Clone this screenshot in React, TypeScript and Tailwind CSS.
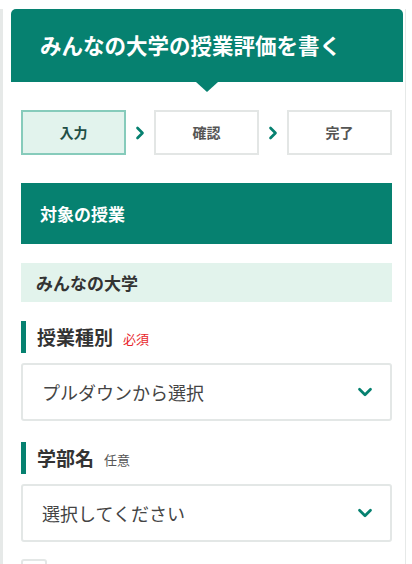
import { ChevronDown, ChevronRight } from "lucide-react"

const steps = [
  { label: "入力", active: true },
  { label: "確認", active: false },
  { label: "完了", active: false },
]

function FieldLabel({ title, tag, required }: { title: string; tag: string; required?: boolean }) {
  return (
    <div className="flex h-[32px] items-stretch">
      <div className="w-[5px] bg-[#068170]" />
      <div className="ml-[11px] flex items-center">
        <span className="text-[19px] font-bold text-[#333]">{title}</span>
        <span
          className={`ml-[10px] mt-[4px] text-[13px] ${required ? "text-[#e8262b]" : "text-[#555]"}`}
        >
          {tag}
        </span>
      </div>
    </div>
  )
}

function SelectBox({ placeholder }: { placeholder: string }) {
  return (
    <div className="mt-[10px] flex h-[58px] items-center justify-between rounded-[3px] border-2 border-[#e3e7e6] bg-white pl-[19px] pr-[14px]">
      <span className="text-[18px] text-[#444]">{placeholder}</span>
      <ChevronDown className="h-[22px] w-[22px] text-[#068170]" strokeWidth={3} />
    </div>
  )
}

export default function App() {
  return (
    <div
      className="h-[564px] w-full overflow-hidden bg-white"
      style={{ fontFamily: '"Noto Sans CJK JP", "Noto Sans", sans-serif' }}
    >
      <div className="min-h-[564px] w-[406px] border-l-[3px] border-r border-[#e6e9e8] pb-[10px]">
        {/* header */}
        <div className="relative ml-[8px] mr-[2px] mt-[9px] flex h-[73px] items-center rounded-t-[5px] bg-[#068170] pl-[29px]">
          <h1 className="text-[21.5px] font-bold text-white">みんなの大学の授業評価を書く</h1>
          <div className="absolute left-1/2 top-full -translate-x-1/2 border-x-[11px] border-t-[10px] border-x-transparent border-t-[#068170]" />
        </div>

        <div className="ml-[18px] mr-[13px]">
          {/* steps */}
          <div className="mt-[28px] flex items-center">
            {steps.map((step, i) => (
              <div key={step.label} className="flex items-center">
                {i > 0 ? (
                  <div className="flex w-[28px] justify-center">
                    <ChevronRight className="h-[20px] w-[20px] text-[#068170]" strokeWidth={3.2} />
                  </div>
                ) : null}
                <div
                  className={`flex h-[45px] w-[105px] items-center justify-center border-2 text-[14px] font-bold ${
                    step.active
                      ? "border-[#86cbbb] bg-[#e2f3ed] text-[#1f4f46]"
                      : "border-[#e3e6e5] bg-white text-[#555]"
                  }`}
                >
                  {step.label}
                </div>
              </div>
            ))}
          </div>

          {/* section */}
          <div className="mt-[28px] flex h-[61px] items-center bg-[#068170] pl-[19px]">
            <h2 className="text-[17px] font-bold text-white">対象の授業</h2>
          </div>

          <div className="mt-[19px] flex h-[39px] items-center bg-[#e2f3ec] pl-[15px]">
            <span className="text-[17px] font-bold text-[#333]">みんなの大学</span>
          </div>

          <div className="mt-[19px]">
            <FieldLabel title="授業種別" tag="必須" required />
            <SelectBox placeholder="プルダウンから選択" />
          </div>

          <div className="mt-[21px]">
            <FieldLabel title="学部名" tag="任意" />
            <SelectBox placeholder="選択してください" />
          </div>

          <div className="mt-[17px] h-[26px] w-[26px] rounded-[3px] border-2 border-[#e3e7e6]" />
        </div>
      </div>
    </div>
  )
}
